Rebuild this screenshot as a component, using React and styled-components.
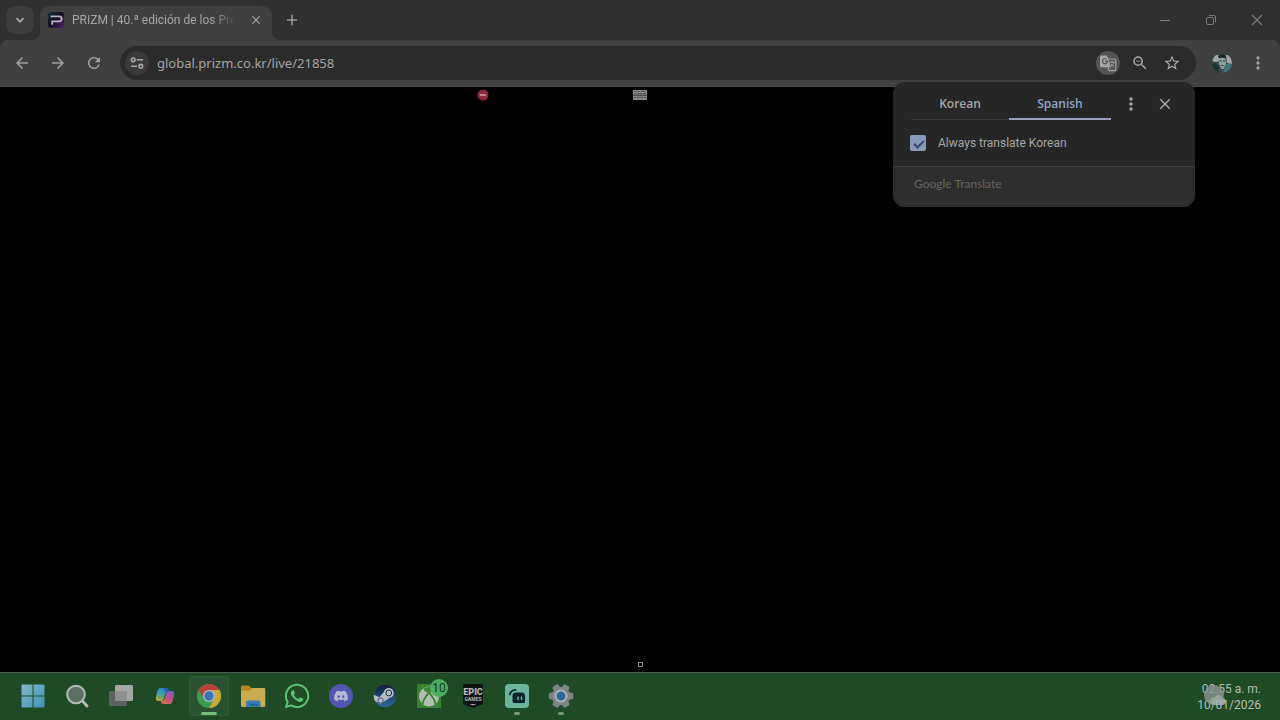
import React from 'react'
import styled, { createGlobalStyle, css } from 'styled-components'
import {
    MdAdd,
    MdArrowBack,
    MdArrowForward,
    MdClose,
    MdMoreVert,
    MdRefresh,
    MdStarBorder,
    MdZoomOut,
} from 'react-icons/md'
import { FaDiscord, FaWhatsapp } from 'react-icons/fa'

function App() {
    return (
        <>
            <GlobalStyle />
            <Desktop>
                <BrowserTop>
                    <TabStrip />
                    <Toolbar />
                </BrowserTop>
                <Page>
                    <TopMarks>
                        <StopIcon />
                        <BannerIcon />
                    </TopMarks>
                    <EmptyBox />
                </Page>
                <Taskbar />
            </Desktop>
        </>
    )
}

export default App

function TabStrip() {
    return (
        <Strip>
            <TabSearch aria-label="Search tabs">
                <svg width="10" height="10" viewBox="0 0 10 10" fill="none" stroke="currentColor" strokeWidth="1.8">
                    <path d="M1.5 3.2 5 6.7l3.5-3.5" />
                </svg>
            </TabSearch>
            <Tab>
                <Favicon />
                <TabTitle>PRIZM | 40.ª edición de los Prem</TabTitle>
                <TabClose aria-label="Close tab"><MdClose size={14} /></TabClose>
            </Tab>
            <NewTab aria-label="New tab"><MdAdd size={18} /></NewTab>
            <WindowButtons>
                <WindowButton aria-label="Minimize">
                    <svg width="12" height="12" viewBox="0 0 12 12" stroke="currentColor"><path d="M1 6.5h10" /></svg>
                </WindowButton>
                <WindowButton aria-label="Restore">
                    <svg width="12" height="12" viewBox="0 0 12 12" fill="none" stroke="currentColor">
                        <rect x="1.5" y="3.5" width="7" height="7" rx="1.4" />
                        <path d="M3.7 1.5H9a1.5 1.5 0 0 1 1.5 1.5v5.3" />
                    </svg>
                </WindowButton>
                <WindowButton aria-label="Close">
                    <svg width="12" height="12" viewBox="0 0 12 12" stroke="currentColor" strokeWidth="1.1">
                        <path d="m1 1 10 10M11 1 1 11" />
                    </svg>
                </WindowButton>
            </WindowButtons>
        </Strip>
    )
}

function Toolbar() {
    return (
        <Bar>
            <NavButton aria-label="Back"><MdArrowBack size={18} /></NavButton>
            <NavButton aria-label="Forward"><MdArrowForward size={18} /></NavButton>
            <NavButton aria-label="Reload"><MdRefresh size={18} /></NavButton>
            <Omnibox>
                <SiteButton aria-label="Site information"><TuneIcon /></SiteButton>
                <UrlInput aria-label="Address" type="text" defaultValue="global.prizm.co.kr/live/21858" spellCheck={false} />
                <RoundButton aria-label="Translate this page" $active><TranslateIcon /></RoundButton>
                <RoundButton aria-label="Zoom"><MdZoomOut size={18} /></RoundButton>
                <RoundButton aria-label="Bookmark"><MdStarBorder size={18} /></RoundButton>
            </Omnibox>
            <ProfileButton aria-label="Profile"><Avatar /></ProfileButton>
            <NavButton aria-label="Menu"><MdMoreVert size={20} /></NavButton>
            <TranslatePopup />
        </Bar>
    )
}

function TranslatePopup() {
    return (
        <Popup>
            <PopupHeader>
                <Language>Korean</Language>
                <Language $selected>Spanish</Language>
                <PopupButtons>
                    <PopupButton aria-label="Translate options"><MdMoreVert size={20} /></PopupButton>
                    <PopupButton aria-label="Close"><MdClose size={18} /></PopupButton>
                </PopupButtons>
            </PopupHeader>
            <CheckRow>
                <CheckBox type="checkbox" id="always" defaultChecked />
                <label htmlFor="always">Always translate Korean</label>
            </CheckRow>
            <PopupFooter>Google Translate</PopupFooter>
        </Popup>
    )
}

const apps = [
    { name: 'Start', icon: <WindowsIcon /> },
    { name: 'Search', icon: <SearchIcon /> },
    { name: 'Task view', icon: <TaskViewIcon /> },
    { name: 'Copilot', icon: <CopilotIcon /> },
    { name: 'Chrome', icon: <ChromeIcon />, state: 'active' },
    { name: 'File Explorer', icon: <FolderIcon /> },
    { name: 'WhatsApp', icon: <FaWhatsapp size={28} color="#5cc176" /> },
    { name: 'Discord', icon: <DiscordIcon /> },
    { name: 'Steam', icon: <SteamIcon /> },
    { name: 'Xbox', icon: <XboxIcon />, badge: '10' },
    { name: 'Epic Games', icon: <EpicIcon /> },
    { name: 'Streamlabs', icon: <StreamlabsIcon />, state: 'open' },
    { name: 'Settings', icon: <SettingsIcon />, state: 'open' },
]

function Taskbar() {
    return (
        <TaskbarWrap>
            <AppList>
                {apps.map(({ name, icon, state, badge }) => (
                    <AppButton key={name} aria-label={name} $state={state}>
                        {icon}
                        {badge && <Badge>{badge}</Badge>}
                    </AppButton>
                ))}
            </AppList>
            <Clock>
                <span>02:55 a. m.</span>
                <span>10/01/2026</span>
                <CloudOverlay>
                    <svg width="24" height="22" viewBox="0 0 24 22">
                        <circle cx="11" cy="10" r="10" fill="#8b9492" />
                        <path d="M11 20a4 4 0 0 1 .5-8A5 5 0 0 1 20 13a3.6 3.6 0 0 1 0 7z" fill="#b3bab8" />
                    </svg>
                </CloudOverlay>
            </Clock>
        </TaskbarWrap>
    )
}

/* icons */

function Favicon() {
    return (
        <svg width="16" height="16" viewBox="0 0 16 16">
            <defs>
                <linearGradient id="fav" x1="0" y1="0" x2="1" y2="1">
                    <stop offset="0" stopColor="#17343d" />
                    <stop offset="0.45" stopColor="#10101c" />
                    <stop offset="1" stopColor="#54226e" />
                </linearGradient>
            </defs>
            <rect width="16" height="16" rx="3" fill="url(#fav)" />
            <path d="M2.5 4.3h8.7a2.5 2.5 0 0 1 0 5H4.2v3.5" fill="none" stroke="#b4b8c4" strokeWidth="1.8" />
        </svg>
    )
}

function TuneIcon() {
    return (
        <svg width="14" height="14" viewBox="0 0 14 14" fill="none" stroke="currentColor" strokeWidth="1.6">
            <circle cx="3.2" cy="3.8" r="1.8" />
            <path d="M6.8 3.8H13M1 10.2h6.2" />
            <circle cx="10.8" cy="10.2" r="1.8" />
        </svg>
    )
}

function TranslateIcon() {
    return (
        <svg width="18" height="18" viewBox="0 0 18 18" fill="none">
            <path d="M7.5 5h8a1.3 1.3 0 0 1 1.3 1.3v9a1.3 1.3 0 0 1-1.3 1.3H10z" stroke="#a3a3a3" strokeWidth="1.2" />
            <path d="M2.3 1.4h5.9l3.8 11.8H2.3A1.3 1.3 0 0 1 1 11.9V2.7a1.3 1.3 0 0 1 1.3-1.3z" fill="#a3a3a3" />
            <path d="M7.7 5.4a2.5 2.5 0 1 0 .8 2H6.2" stroke="#545454" strokeWidth="1.2" />
            <path d="M10.8 8.2h5M13.3 7v1.2M15 8.2c-.5 2-1.8 3.5-3.3 4.5M12 9.8c.7 1.3 1.7 2.2 2.9 3" stroke="#a3a3a3" />
        </svg>
    )
}

function Avatar() {
    return (
        <svg width="20" height="20" viewBox="0 0 20 20">
            <clipPath id="face"><circle cx="10" cy="10" r="10" /></clipPath>
            <g clipPath="url(#face)">
                <rect width="20" height="20" fill="#3b4a4c" />
                <path d="M0 2h7v6l-3 1-4-1zM14 2h6v9l-5-1z" fill="#a4a9a8" />
                <path d="M6 3c3-3 8-2 8 2l-1 2-6-1z" fill="#1f2829" />
                <path d="M6.5 5.5c2-1 5-1 7 0l.5 5-2.5 5.5h-2L7 11z" fill="#8fa3a1" />
                <path d="M7.5 8h2M11 8h2M9.2 12.5h2.3" stroke="#253132" />
                <path d="M0 11l3-1 4 3v7H0z" fill="#1d3334" />
                <path d="M14 11h6v9h-9z" fill="#3a7775" />
            </g>
        </svg>
    )
}

function StopIcon() {
    return (
        <svg width="12" height="12" viewBox="0 0 12 12">
            <circle cx="6" cy="6" r="5.5" fill="#8f2b3b" />
            <rect x="3" y="5" width="6" height="2" rx="0.5" fill="#c98b92" />
        </svg>
    )
}

function BannerIcon() {
    return (
        <svg width="14" height="10" viewBox="0 0 14 10">
            <rect width="14" height="10" fill="#8a8a8a" />
            <path d="M1 1.5h3M5 1.5h2M8 1.5h4M1 3.5h2M4 3.5h5M10 3.5h3" stroke="#555" />
            <path d="M0 5.2h14" stroke="#333" />
            <path d="M1 7.5h2M4.5 6.5v2M6 7.5h2M9.5 6.5v2M11 7.5h2" stroke="#4a4a4a" />
        </svg>
    )
}

function WindowsIcon() {
    return (
        <svg width="24" height="24" viewBox="0 0 24 24">
            <defs>
                <linearGradient id="win" x1="0" y1="0" x2="1" y2="1">
                    <stop offset="0" stopColor="#85b9c9" />
                    <stop offset="1" stopColor="#3f92b8" />
                </linearGradient>
            </defs>
            <path d="M1.5.5h10v11H.5v-10a1 1 0 0 1 1-1zM12.5.5h10a1 1 0 0 1 1 1v10h-11zM.5 12.5h11v11h-10a1 1 0 0 1-1-1zM12.5 12.5h11v10a1 1 0 0 1-1 1h-10z" fill="url(#win)" />
        </svg>
    )
}

function SearchIcon() {
    return (
        <svg width="24" height="24" viewBox="0 0 24 24">
            <circle cx="11" cy="10.5" r="8.8" fill="#5b6f62" stroke="#b6bcb8" strokeWidth="2" />
            <path d="m17.5 17 4.5 5" stroke="#b6bcb8" strokeWidth="2.8" strokeLinecap="round" />
        </svg>
    )
}

function TaskViewIcon() {
    return (
        <svg width="26" height="24" viewBox="0 0 26 24">
            <rect x="1" y="7" width="18" height="15" rx="1" fill="#5d625e" />
            <rect x="7" y="1" width="18" height="16" rx="1" fill="#a6a6a6" />
            <path d="M7 7h12v10H7z" fill="#8f908f" />
        </svg>
    )
}

function CopilotIcon() {
    return (
        <svg width="20" height="18" viewBox="0 0 20 18">
            <defs>
                <linearGradient id="copA" x1="0.5" y1="0" x2="0.2" y2="1">
                    <stop offset="0" stopColor="#2c7fc0" />
                    <stop offset="0.45" stopColor="#3b9fae" />
                    <stop offset="0.75" stopColor="#7ba85a" />
                    <stop offset="1" stopColor="#c9a63a" />
                </linearGradient>
                <linearGradient id="copB" x1="0.8" y1="0" x2="0.3" y2="1">
                    <stop offset="0" stopColor="#7c62c4" />
                    <stop offset="0.5" stopColor="#bb4f8f" />
                    <stop offset="1" stopColor="#d0744c" />
                </linearGradient>
            </defs>
            <path d="M14.5 17H8.2c-1.2 0-1.7-.8-2.1-2l-.3-1.2h1.6c1.2 0 1.8-.7 2.1-1.8L11.3 6c.4-1.3 1-2 2.3-2h3.2c2.2 0 2.9 1.7 2.3 3.7l-1.7 6.7c-.5 1.7-1.4 2.6-2.9 2.6z" fill="url(#copB)" />
            <path d="M5.5 1h6.3c1.2 0 1.7.8 2.1 2l.4 1.4h-1.7c-1.2 0-1.8.7-2.1 1.8L8.7 12c-.4 1.3-1 2-2.3 2H3.2C1 14 .3 12.3.9 10.3l1.7-6.7C3.1 1.9 4 1 5.5 1z" fill="url(#copA)" />
            <path d="M8.8 1h3c1.2 0 1.7.8 2.1 2l.4 1.4h-3.1c-1 0-1.5-.6-1.7-1.6z" fill="#2d5bb0" />
        </svg>
    )
}

function ChromeIcon() {
    return (
        <svg width="24" height="24" viewBox="0 0 24 24">
            <circle cx="12" cy="12" r="12" fill="#3a9c52" />
            <path d="M12 12 1.6 6a12 12 0 0 1 20.8 0z" fill="#bb4238" />
            <path d="M12 6h10.4A12 12 0 0 1 12 24l5.2-9z" fill="#c9a83a" />
            <path d="M1.6 6 6.8 15 12 12V6z" fill="#bb4238" />
            <path d="M1.6 6 6.8 15l5.2 3-3 5.6A12 12 0 0 1 1.6 6z" fill="#3a9c52" />
            <circle cx="12" cy="12" r="6" fill="#b9c0c4" />
            <circle cx="12" cy="12" r="4.7" fill="#3a72b8" />
        </svg>
    )
}

function FolderIcon() {
    return (
        <svg width="26" height="24" viewBox="0 0 26 24">
            <path d="M1 3a1.5 1.5 0 0 1 1.5-1.5h6L11.5 4H24v6H1z" fill="#b98526" />
            <path d="M1 6.5h8.5L12 4h12a1.3 1.3 0 0 1 1.3 1.3v16.2a1.5 1.5 0 0 1-1.5 1.5H2.5A1.5 1.5 0 0 1 1 21.5z" fill="#c9ab52" />
            <path d="M6 23v-4.5a2 2 0 0 1 2-2h10.5a2 2 0 0 1 2 2V23z" fill="#3a7db0" />
            <path d="M9 20.5h8.5" stroke="#235a8c" strokeWidth="1.6" />
        </svg>
    )
}

function DiscordIcon() {
    return (
        <svg width="24" height="24" viewBox="0 0 24 24">
            <circle cx="12" cy="12" r="12" fill="#5157b0" />
            <FaDiscord x="4.5" y="4.5" size={15} color="#b9bcd0" />
        </svg>
    )
}

function SteamIcon() {
    return (
        <svg width="24" height="24" viewBox="0 0 24 24">
            <defs>
                <linearGradient id="steam" x1="0" y1="0" x2="0" y2="1">
                    <stop offset="0" stopColor="#141c3c" />
                    <stop offset="1" stopColor="#2c6d9b" />
                </linearGradient>
                <clipPath id="steamClip"><circle cx="12" cy="12" r="11.3" /></clipPath>
            </defs>
            <g clipPath="url(#steamClip)">
                <circle cx="12" cy="12" r="11.5" fill="url(#steam)" />
                <path d="m0 10.5 6.5 2.7L11 7.700l6 5.800-6.500 4.500-3 2L0 16z" fill="#b5bcc2" />
                <circle cx="15.8" cy="9" r="5" fill="#b5bcc2" />
                <circle cx="15.8" cy="9" r="2.9" fill="none" stroke="#1d2c50" />
                <circle cx="7.5" cy="16.5" r="2.7" fill="#b5bcc2" stroke="#1d3b63" strokeWidth="0.8" />
            </g>
        </svg>
    )
}

function XboxIcon() {
    return (
        <svg width="24" height="24" viewBox="0 0 24 24">
            <rect width="24" height="24" rx="1" fill="#38842f" />
            <circle cx="12" cy="12.5" r="10" fill="#b4bdb4" />
            <path d="M6 5c2.500-.5 6 3.500 6 3.500S15.500 4.500 18 5c-3-2.800-9-2.800-12 0z" fill="#38842f" />
            <path d="M7 5.500c6.500 3.500 10.500 9.500 11.500 14.500M17 5.500C10.500 9 6.500 15 5.500 20" fill="none" stroke="#38842f" strokeWidth="1.8" />
        </svg>
    )
}

function EpicIcon() {
    return (
        <svg width="22" height="24" viewBox="0 0 22 24">
            <path d="M2.5 0h17A1.5 1.5 0 0 1 21 1.5V20l-10 4-10-4V1.5A1.5 1.5 0 0 1 2.5 0z" fill="#101312" />
            <text x="11" y="11" textAnchor="middle" fontFamily="Roboto, sans-serif" fontSize="9" fontWeight="900" fill="#b3b8b5">EPIC</text>
            <text x="11" y="17" textAnchor="middle" fontFamily="Roboto, sans-serif" fontSize="5" fontWeight="900" fill="#a3a8a5">GAMES</text>
            <path d="m7.5 20 3.5 1.5 3.5-1.5z" fill="#a3a8a5" />
        </svg>
    )
}

function StreamlabsIcon() {
    return (
        <svg width="24" height="24" viewBox="0 0 24 24">
            <rect width="24" height="24" rx="4" fill="#6cb59d" />
            <path d="M4.8 10.5a6 6 0 0 1 5.7-4.7" fill="none" stroke="#0b2028" strokeWidth="1.8" strokeLinecap="round" />
            <path d="M11 8.5h5.5a3.5 3.5 0 0 1 3.500 3.500v5.500c0 1-.8 1.500-1.700 1.500H9.500c-1.200 0-2-1-2-2v-5A3.500 3.500 0 0 1 11 8.500z" fill="#0b2028" />
            <path d="M13 13v2.5M16.5 13v2.5" stroke="#6cb59d" strokeWidth="1.5" strokeLinecap="round" />
        </svg>
    )
}

function SettingsIcon() {
    return (
        <svg width="26" height="26" viewBox="0 0 26 26">
            <g fill="#7d8587">
                {[30, 90, 150].map(angle => (
                    <rect key={angle} x="9.5" y="0.8" width="7" height="24.4" rx="2" transform={`rotate(${angle} 13 13)`} />
                ))}
                <circle cx="13" cy="13" r="9.3" />
            </g>
            <circle cx="13" cy="13" r="5.5" fill="#2f669c" stroke="#b0b8bc" strokeWidth="2" />
        </svg>
    )
}

const GlobalStyle = createGlobalStyle`
    * {
        box-sizing: border-box;
    }
    body {
        margin: 0;
        background: #000;
        font-family: Roboto, 'Noto Sans', sans-serif;
        font-size: 12px;
        line-height: 16px;
        color: #a6a6a6;
    }
    button, input {
        font: inherit;
        color: inherit;
        border: 0;
        padding: 0;
        margin: 0;
        background: none;
    }
    svg {
        display: block;
        flex-shrink: 0;
    }
`

const Desktop = styled.div`
    min-height: 100vh;
    display: flex;
    flex-direction: column;
`

const BrowserTop = styled.header`
    position: relative;
    z-index: 1;
    background: #303030;
`

const IconButton = styled.button`
    display: flex;
    justify-content: center;
    align-items: center;
    flex-shrink: 0;
`

const Strip = styled.div`
    display: flex;
    align-items: flex-start;
    padding: 6px 0 0 6px;
`

const TabSearch = styled(IconButton)`
    width: 28px;
    height: 28px;
    border-radius: 9px;
    background: #3c3c3c;
`

const Tab = styled.div`
    position: relative;
    display: flex;
    align-items: center;
    gap: 8px;
    width: 232px;
    height: 34px;
    margin-left: 6px;
    padding: 0 8px 6px;
    background: #404040;
    border-radius: 10px 10px 0 0;

    &::before, &::after {
        content: '';
        position: absolute;
        bottom: 0;
        width: 8px;
        height: 8px;
    }
    &::before {
        right: 100%;
        background: radial-gradient(circle at 0 0, transparent 8px, #404040 8px);
    }
    &::after {
        left: 100%;
        background: radial-gradient(circle at 100% 0, transparent 8px, #404040 8px);
    }
`

const TabTitle = styled.span`
    flex: 1;
    overflow: hidden;
    white-space: nowrap;
    mask-image: linear-gradient(to right, #000 85%, transparent);
`

const TabClose = styled(IconButton)`
    width: 16px;
    height: 16px;
    margin-left: 4px;
`

const NewTab = styled(IconButton)`
    width: 28px;
    height: 28px;
    margin-left: 6px;
    color: #999;
`

const WindowButtons = styled.div`
    display: flex;
    margin-left: auto;
`

const WindowButton = styled(IconButton)`
    width: 46px;
    height: 28px;
    color: #7c7c7c;
`

const Bar = styled.div`
    position: relative;
    display: flex;
    align-items: center;
    height: 47px;
    padding: 0 4px;
    background: #404040;
    border-bottom: 1px solid #4a4a4a;
    border-radius: 8px 8px 0 0;
`

const NavButton = styled(IconButton)`
    width: 36px;
    height: 34px;
    color: #a0a0a0;
`

const Omnibox = styled.div`
    flex: 1;
    display: flex;
    align-items: center;
    gap: 8px;
    height: 34px;
    margin-left: 8px;
    padding: 0 12px 0 5px;
    border-radius: 17px;
    background: #2b2b2b;
`

const RoundButton = styled(IconButton)`
    width: 24px;
    height: 24px;
    border-radius: 50%;
    background: ${props => props.$active ? '#545454' : 'transparent'};
`

const SiteButton = styled(RoundButton)`
    background: #3a3a3a;
`

const UrlInput = styled.input`
    flex: 1;
    min-width: 0;
    font-family: 'Noto Sans', sans-serif;
    font-size: 13px;
    outline: none;
`

const ProfileButton = styled(IconButton)`
    width: 36px;
    height: 34px;
    margin-left: 8px;
`

const Popup = styled.section`
    position: absolute;
    top: 42px;
    right: 85px;
    width: 302px;
    border-radius: 12px;
    overflow: hidden;
    background: #262626;
`

const PopupHeader = styled.div`
    display: flex;
    padding: 6px 18px 0;
`

const Language = styled.button`
    width: ${props => props.$selected ? '102px' : '98px'};
    height: 32px;
    font-family: 'Open Sans', sans-serif;
    font-weight: 600;
    color: ${props => props.$selected ? '#8fa3c8' : 'inherit'};
    box-shadow: ${props => props.$selected ? 'inset 0 -2px #9a9fc0' : 'inset 0 -1px #3c3c3c'};
`

const PopupButtons = styled.div`
    display: flex;
    align-items: center;
    margin-left: auto;
    gap: 10px;
`

const PopupButton = styled(IconButton)`
    width: 24px;
    height: 24px;
`

const CheckRow = styled.div`
    display: flex;
    align-items: center;
    gap: 12px;
    height: 46px;
    padding: 0 17px;
`

const CheckBox = styled.input`
    appearance: none;
    position: relative;
    width: 16px;
    height: 16px;
    border-radius: 2px;
    background: #8b99b8;

    &:checked::after {
        content: '';
        position: absolute;
        left: 6px;
        top: 3px;
        width: 4px;
        height: 8px;
        border: solid #34466f;
        border-width: 0 2px 2px 0;
        transform: rotate(45deg);
    }
`

const PopupFooter = styled.footer`
    padding: 9px 21px 15px;
    border-top: 1px solid #3e3e3e;
    background: #2e2e2e;
    color: #656565;
    font-family: Lato, sans-serif;
`

const Page = styled.main`
    flex: 1;
    display: flex;
    flex-direction: column;
    justify-content: space-between;
    padding: 2px 0 5px;
    background: #000;
`

const TopMarks = styled.div`
    display: grid;
    grid-template-columns: 1fr auto 1fr;
    align-items: center;

    svg:first-child {
        justify-self: end;
        margin-right: 144px;
    }
`

const EmptyBox = styled.div`
    align-self: center;
    width: 5px;
    height: 5px;
    border: 1px solid #8a8a8a;
`

const TaskbarWrap = styled.footer`
    display: flex;
    justify-content: space-between;
    align-items: center;
    height: 48px;
    padding: 0 19px 0 13px;
    border-top: 1px solid #4d5a4f;
    background: #1f4a26;
`

const AppList = styled.nav`
    display: flex;
    gap: 4px;
    padding-bottom: 2px;
`

const AppButton = styled(IconButton)`
    position: relative;
    width: 40px;
    height: 40px;
    border-radius: 4px;

    ${props => props.$state === 'active' && css`
        background: #2a5132;
        box-shadow: inset 0 0 0 1px #335939;
    `}
    ${props => props.$state && css`
        &::after {
            content: '';
            position: absolute;
            bottom: 1px;
            width: ${props.$state === 'active' ? '16px' : '6px'};
            height: 3px;
            border-radius: 2px;
            background: ${props.$state === 'active' ? '#6fc078' : '#7d9480'};
        }
    `}
`

const Badge = styled.span`
    position: absolute;
    top: 3px;
    right: 1px;
    width: 18px;
    height: 18px;
    line-height: 18px;
    border-radius: 9px;
    background: #4cae5e;
    color: #12321a;
`

const Clock = styled.div`
    position: relative;
    display: flex;
    flex-direction: column;
    align-items: flex-end;
    color: #b2bfb4;
`

const CloudOverlay = styled.div`
    position: absolute;
    left: 6px;
    top: 4px;
    opacity: 0.8;
`
